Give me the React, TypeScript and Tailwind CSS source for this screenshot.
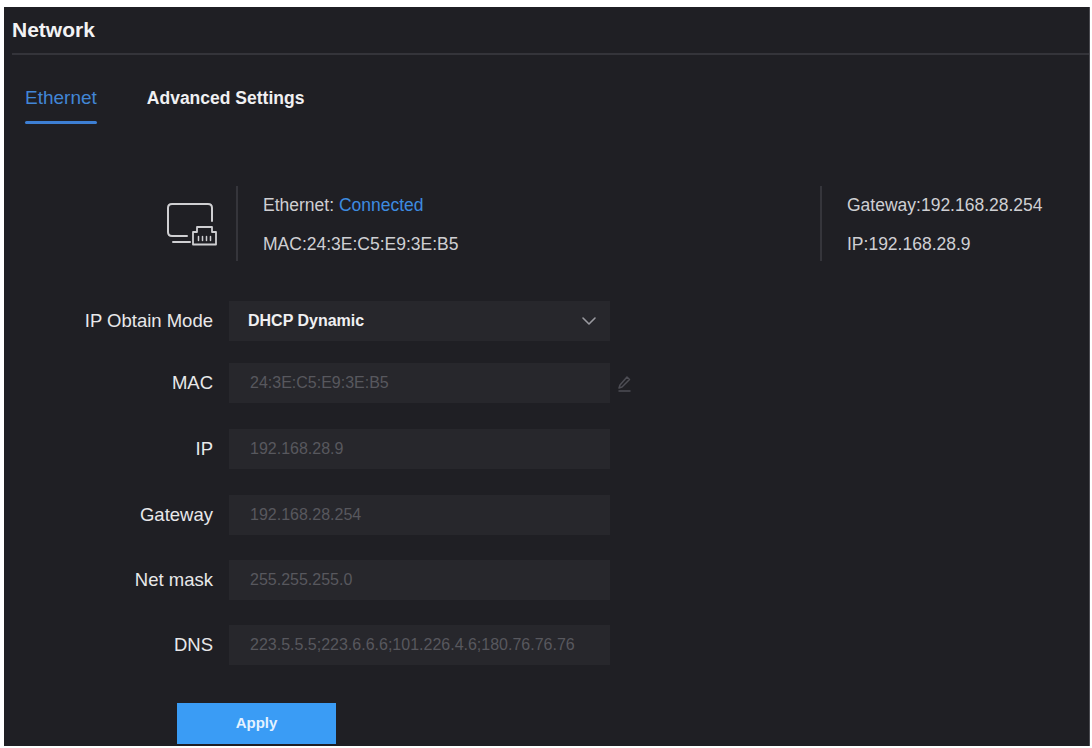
import React from "react";

const font = { fontFamily: '"Liberation Sans", Arial, sans-serif' };

function EthIcon() {
  return (
    <svg width="52" height="48" viewBox="0 0 52 48" fill="none" stroke="#cfcfd2" strokeWidth="2" strokeLinecap="round" strokeLinejoin="round">
      <path d="M46 22 V9 Q46 5 42 5 H6 Q2 5 2 9 V33 Q2 37 6 37 H21" />
      <path d="M7 43 H24" />
      <path d="M27 45.5 V33 H31 V28 H46 V33 H50 V45.5 Z" strokeWidth="1.8" />
      <path d="M32.5 37.5 V41.5 M36.5 37.5 V41.5 M40.5 37.5 V41.5 M44.5 37.5 V41.5" strokeWidth="1.5" />
    </svg>
  );
}

function Chevron() {
  return (
    <svg width="16" height="10" viewBox="0 0 16 10" fill="none" stroke="#9a9aa0" strokeWidth="1.6" strokeLinecap="round" strokeLinejoin="round">
      <path d="M2 2 L8 8 L14 2" />
    </svg>
  );
}

function EditIcon() {
  return (
    <svg width="16" height="18" viewBox="0 0 16 18" fill="none" stroke="#4d4d54" strokeWidth="1.5" strokeLinecap="round" strokeLinejoin="round">
      <path d="M11 2 L13.5 4.5 L6 12 L3 13 L4 10 Z" />
      <path d="M3 16 H14" />
    </svg>
  );
}

function Row({ label, children, mt, extra }: { label: string; children: React.ReactNode; mt: string; extra?: React.ReactNode }) {
  return (
    <div className={`flex items-center ${mt}`}>
      <div className="w-[209px] text-right text-[18.5px] leading-[24px] text-[#e8e8ea]">{label}</div>
      <div className="ml-[16px] w-[381px] h-[40px] bg-[#27272c] flex items-center overflow-hidden">{children}</div>
      {extra}
    </div>
  );
}

function Value({ v }: { v: string }) {
  return (
    <div className="pl-[21px] pr-[18px] text-[16px] leading-[20px] text-[#58585e] whitespace-nowrap overflow-hidden">{v}</div>
  );
}

export default function App() {
  return (
    <div className="w-[1092px] h-[748px] bg-white pt-[7px] pl-[4px] overflow-hidden" style={font}>
      <div className="w-[1086px] h-[739px] bg-[#1f1f24] border-r border-[#4a4a50] flex flex-col">
        {/* Header */}
        <div className="h-[46px] pl-[8px] flex items-center">
          <span className="text-[21px] font-semibold text-[#f2f2f4] leading-[26px]">Network</span>
        </div>
        <div className="ml-[8px] h-[2px] bg-[#34343a]" />

        {/* Tabs */}
        <div className="pl-[21px] pt-[31px] flex items-start gap-[50px]">
          <div className="flex flex-col">
            <span className="text-[19px] leading-[24px] text-[#4286d6]">Ethernet</span>
            <div className="mt-[11px] h-[3px] bg-[#3d7fd4] rounded-full" />
          </div>
          <span className="text-[17.5px] leading-[24px] font-bold text-[#f0f0f2]">Advanced Settings</span>
        </div>

        {/* Info */}
        <div className="mt-[62px] flex h-[75px]">
          <div className="ml-[162px] mt-[13px]">
            <EthIcon />
          </div>
          <div className="ml-[18px] w-[2px] bg-[#35353b]" />
          <div className="ml-[25px] flex-1 flex flex-col pt-[7px] gap-[15px] text-[17.5px] leading-[24px] text-[#cfcfd3]">
            <div>
              Ethernet: <span className="text-[#3d8be0]">Connected</span>
            </div>
            <div>MAC:24:3E:C5:E9:3E:B5</div>
          </div>
          <div className="w-[2px] bg-[#35353b]" />
          <div className="w-[267px] pl-[25px] flex flex-col pt-[7px] gap-[15px] text-[17.5px] leading-[24px] text-[#cfcfd3]">
            <div>Gateway:192.168.28.254</div>
            <div>IP:192.168.28.9</div>
          </div>
        </div>

        {/* Form */}
        <div className="mt-[40px] flex flex-col">
          <Row label="IP Obtain Mode" mt="mt-0">
            <div className="flex-1 flex items-center justify-between pl-[19px] pr-[13px]">
              <span className="text-[16px] font-bold text-[#f0f0f2] leading-[20px]">DHCP Dynamic</span>
              <Chevron />
            </div>
          </Row>
          <Row
            label="MAC"
            mt="mt-[22px]"
            extra={
              <div className="ml-[6px] mt-[2px]">
                <EditIcon />
              </div>
            }
          >
            <Value v="24:3E:C5:E9:3E:B5" />
          </Row>
          <Row label="IP" mt="mt-[26px]">
            <Value v="192.168.28.9" />
          </Row>
          <Row label="Gateway" mt="mt-[26px]">
            <Value v="192.168.28.254" />
          </Row>
          <Row label="Net mask" mt="mt-[25px]">
            <Value v="255.255.255.0" />
          </Row>
          <Row label="DNS" mt="mt-[25px]">
            <Value v="223.5.5.5;223.6.6.6;101.226.4.6;180.76.76.76" />
          </Row>
        </div>

        {/* Apply */}
        <div className="mt-[38px] ml-[173px]">
          <button className="w-[159px] h-[41px] bg-[#3a9cf5] text-[15px] font-bold text-[#e4f2ff] flex items-center justify-center">
            Apply
          </button>
        </div>
      </div>
    </div>
  );
}
